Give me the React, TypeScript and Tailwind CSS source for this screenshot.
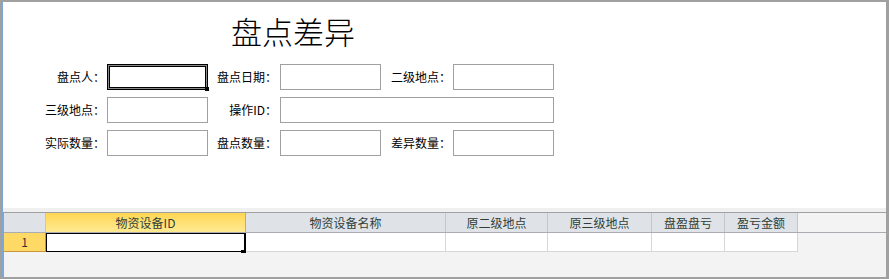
import { ReactNode } from 'react'

const font = { fontFamily: '"Noto Sans CJK SC", "Noto Sans", sans-serif' }

function Label({ children, w, pr }: { children: ReactNode; w: string; pr: string }) {
  return <div className={`${w} ${pr} shrink-0 text-right text-[12px] leading-[26px] text-black`}>{children}</div>
}

function Field({ w, active }: { w: string; active?: boolean }) {
  if (active) {
    return (
      <div className={`relative ${w} h-[26px] shrink-0 border border-black bg-white shadow-[inset_0_0_0_1px_#8a8a8a,inset_0_0_0_2px_#000]`}>
        <span className="absolute -right-[2px] -bottom-[2px] h-[4px] w-[4px] bg-black" />
      </div>
    )
  }
  return <div className={`${w} h-[26px] shrink-0 border border-[#a0a0a0] bg-white`} />
}

const columns = [
  { name: '物资设备ID', w: 'w-[200px]' },
  { name: '物资设备名称', w: 'w-[200px]' },
  { name: '原二级地点', w: 'w-[102px]' },
  { name: '原三级地点', w: 'w-[104px]' },
  { name: '盘盈盘亏', w: 'w-[73px]' },
  { name: '盈亏金额', w: 'w-[73px]' },
]

export default function App() {
  return (
    <div
      style={font}
      className="flex h-[279px] w-[889px] border-t-2 border-b-2 border-l-2 border-r-[3px] border-[#a0a0a0] bg-white"
    >
      <div className="flex flex-1 flex-col border-l border-[#7aa7d8]">
        {/* form */}
        <div className="h-[206px] bg-white">
          <div className="pl-[228px] pt-[13px] text-[31px] font-light leading-[31px] text-black">盘点差异</div>
          <div className="mt-[18px] flex flex-col gap-[7px]">
            <div className="flex">
              <Label w="w-[104px]" pr="pr-[2px]">盘点人：</Label>
              <Field w="w-[101px]" active />
              <Label w="w-[72px]" pr="pr-[3px]">盘点日期：</Label>
              <Field w="w-[101px]" />
              <Label w="w-[72px]" pr="pr-[2px]">二级地点：</Label>
              <Field w="w-[101px]" />
            </div>
            <div className="flex">
              <Label w="w-[104px]" pr="pr-[2px]">三级地点：</Label>
              <Field w="w-[101px]" />
              <Label w="w-[72px]" pr="pr-[3px]">操作ID：</Label>
              <Field w="w-[274px]" />
            </div>
            <div className="flex">
              <Label w="w-[104px]" pr="pr-[2px]">实际数量：</Label>
              <Field w="w-[101px]" />
              <Label w="w-[72px]" pr="pr-[3px]">盘点数量：</Label>
              <Field w="w-[101px]" />
              <Label w="w-[72px]" pr="pr-[2px]">差异数量：</Label>
              <Field w="w-[101px]" />
            </div>
          </div>
        </div>

        {/* datasheet */}
        <div className="h-[4px] bg-[#f0f0f0]" />
        <div className="flex flex-1 flex-col border-t border-l border-[#a0a0a0] bg-[#f3f3f3]">
          <div className="flex h-[20px] border-b border-[#a9adb2] text-[12px] leading-[19px] text-[#2f3f38]">
            <div className="w-[42px] shrink-0 border-r border-[#c3c7cc] bg-[#dfe3e8]" />
            {columns.map((c, i) => (
              <div
                key={c.name}
                className={
                  i === 0
                    ? `${c.w} shrink-0 border-r border-[#e0a93c] bg-gradient-to-b from-[#ffd650] to-[#ffea92] text-center`
                    : `${c.w} shrink-0 border-r border-[#c3c7cc] bg-[#dfe3e8] text-center`
                }
              >
                {c.name}
              </div>
            ))}
          </div>
          <div className="flex h-[19px] text-[12px] leading-[18px]">
            <div className="w-[42px] shrink-0 border-b border-r border-[#c8963c] bg-[#ffd966] text-center text-[#333]">1</div>
            {columns.map((c, i) =>
              i === 0 ? (
                <div key={c.name} className={`relative ${c.w} shrink-0 border border-r-2 border-black bg-white`}>
                  <span className="absolute -right-[2px] -bottom-[2px] h-[3px] w-[5px] bg-black" />
                </div>
              ) : (
                <div key={c.name} className={`${c.w} shrink-0 border-r border-b border-[#d6d6d6] bg-white`} />
              ),
            )}
          </div>
        </div>
      </div>
    </div>
  )
}
